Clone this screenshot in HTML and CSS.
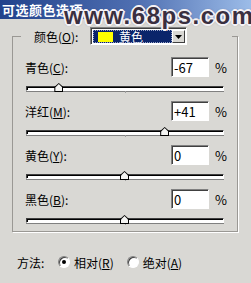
FILE: index.html
```html
<!DOCTYPE html>
<html lang="zh-CN">
<head>
    <meta charset="UTF-8">
    <meta name="viewport" content="width=device-width, initial-scale=1.0">
    <title>可选颜色选项</title>
    <link rel="stylesheet" href="styles.css">
</head>
<body>
    <div class="dialog">
        <div class="titlebar"><span class="title">可选颜色选项</span></div>
        <div class="watermark">www.68ps.com</div>

        <fieldset class="group">
            <legend class="group-head">
                <span class="lbl">颜色(<u>O</u>):</span>
                <div class="combo">
                    <div class="combo-field">
                        <span class="swatch"></span>
                        <span class="combo-text">黄色</span>
                    </div>
                    <div class="combo-btn">
                        <svg width="7" height="4" viewBox="0 0 7 4"><path d="M0 0h7L3.5 4z" fill="#000"/></svg>
                    </div>
                </div>
            </legend>

            <div class="channel">
                <div class="field-row">
                    <span class="lbl">青色(<u>C</u>):</span>
                    <div class="num">-67</div>
                    <span class="pct">%</span>
                </div>
                <div class="track"><span class="tick"></span><span class="thumb" style="left: 16.5%"></span></div>
            </div>

            <div class="channel">
                <div class="field-row">
                    <span class="lbl">洋红(<u>M</u>):</span>
                    <div class="num">+41</div>
                    <span class="pct">%</span>
                </div>
                <div class="track"><span class="tick"></span><span class="thumb" style="left: 70.5%"></span></div>
            </div>

            <div class="channel">
                <div class="field-row">
                    <span class="lbl">黄色(<u>Y</u>):</span>
                    <div class="num">0</div>
                    <span class="pct">%</span>
                </div>
                <div class="track"><span class="tick"></span><span class="thumb" style="left: 50%"></span></div>
            </div>

            <div class="channel">
                <div class="field-row">
                    <span class="lbl">黑色(<u>B</u>):</span>
                    <div class="num">0</div>
                    <span class="pct">%</span>
                </div>
                <div class="track"><span class="tick"></span><span class="thumb" style="left: 50%"></span></div>
            </div>
        </fieldset>

        <div class="method">
            <span class="method-lbl">方法:</span>
            <span class="radio checked"></span>
            <span class="radio-lbl">相对(<u>R</u>)</span>
            <span class="radio"></span>
            <span class="radio-lbl">绝对(<u>A</u>)</span>
        </div>
    </div>
</body>
</html>
```

FILE: styles.css
```css
body {
    margin: 0;
    background-color: #d9d8d4;
    font-family: "Noto Sans CJK SC", "DejaVu Sans", sans-serif;
    font-size: 12px;
    color: #000;
}

.dialog {
    position: relative;
    width: 251px;
    height: 283px;
    overflow: hidden;
}

.titlebar {
    height: 19px;
    display: flex;
    align-items: center;
    padding-left: 2px;
    background: linear-gradient(90deg, #22428c 0%, #5070b2 55%, #9cbce8 100%);
}

.title {
    color: #fff;
    font-weight: bold;
    font-size: 13px;
    line-height: 15px;
    letter-spacing: 0.5px;
    white-space: nowrap;
}

/* site watermark stamped over the dialog */
.watermark {
    position: absolute;
    left: 64px;
    top: 4px;
    white-space: nowrap;
    font-family: "Liberation Sans", Arial, sans-serif;
    font-weight: bold;
    font-size: 24px;
    line-height: 24px;
    letter-spacing: 1.5px;
    color: #3a2f40;
    text-shadow: -1px -1px 0 #f4f2f6, 1px -1px 0 #f4f2f6, -1px 1px 0 #f4f2f6, 1px 1px 0 #f4f2f6,
        0 -2px 0 #f4f2f6, 0 2px 0 #f4f2f6, -2px 0 0 #f4f2f6, 2px 0 0 #f4f2f6,
        0 0 3px #3a2f40;
}

u {
    text-decoration: underline;
    text-underline-offset: 1px;
}

.group {
    margin: 8px 0 0 12px;
    width: 226px;
    min-width: 0;
    box-sizing: border-box;
    padding: 12px 12px 8px 12px;
    border: 1px solid #9a9894;
    box-shadow: 1px 1px 0 #fff;
}

.group-head {
    display: flex;
    align-items: center;
    width: 211px;
    box-sizing: border-box;
    height: 18px;
    margin-left: -4px;
    padding: 0 0 0 13px;
}

.group-head .lbl {
    width: 56px;
}

.combo {
    display: flex;
    width: 97px;
    height: 18px;
    box-sizing: border-box;
    border: 1px solid;
    border-color: #808080 #fff #fff #808080;
    box-shadow: inset 1px 1px 0 #404040;
    background: #fff;
    padding: 2px 1px 1px 2px;
}

.combo-field {
    flex: 1;
    display: flex;
    align-items: center;
    background: #0a246a;
    outline: 1px dotted #9aa4c8;
    outline-offset: -1px;
    padding-left: 5px;
}

.swatch {
    width: 15px;
    height: 10px;
    background: #ffff00;
    margin-right: 6px;
}

.combo-text {
    color: #fff;
    line-height: 12px;
}

.combo-btn {
    width: 13px;
    display: flex;
    align-items: center;
    justify-content: center;
    background: #d9d8d4;
    box-sizing: border-box;
    border: 1px solid;
    border-color: #fff #404040 #404040 #fff;
}

.field-row {
    display: flex;
    align-items: center;
    height: 20px;
}

.field-row .lbl {
    flex: 1;
}

.num {
    width: 38px;
    height: 20px;
    box-sizing: border-box;
    border: 1px solid;
    border-color: #808080 #fff #fff #808080;
    box-shadow: inset 1px 1px 0 #404040;
    background: #fff;
    padding: 2px 0 0 2px;
    line-height: 15px;
    font-size: 13px;
    margin-right: 6px;
}

.pct {
    width: 10px;
    font-size: 13px;
}

.track {
    position: relative;
    height: 5px;
    margin: 9px 1px 10px 1px;
    box-sizing: border-box;
    border: 1px solid;
    border-color: #404040 #fff #fff #404040;
    box-shadow: inset 1px 1px 0 #000, 0 1px 0 #808080;
    background: #fff;
}

.channel:last-child .track {
    margin-bottom: 0;
}

.tick {
    position: absolute;
    left: 50%;
    top: 4px;
    width: 1px;
    height: 2px;
    background: #a0a0a0;
}

.thumb {
    position: absolute;
    top: -4px;
    width: 9px;
    height: 9px;
    margin-left: -5px;
    background: #000;
    clip-path: polygon(50% 0, 100% 45%, 100% 100%, 0 100%, 0 45%);
}

.thumb::after {
    content: "";
    position: absolute;
    left: 1px;
    top: 1px;
    width: 7px;
    height: 7px;
    background: #f4f4f2;
    clip-path: polygon(50% 0, 100% 50%, 100% 100%, 0 100%, 0 50%);
}

.method {
    display: flex;
    align-items: center;
    height: 16px;
    margin-top: 22px;
    padding-left: 17px;
}

.method-lbl {
    width: 41px;
}

.radio {
    width: 12px;
    height: 12px;
    box-sizing: border-box;
    border-radius: 50%;
    border: 1px solid;
    border-color: #808080 #fff #fff #808080;
    box-shadow: inset 1px 1px 0 #404040;
    background: #fff;
    margin-right: 4px;
    display: flex;
    align-items: center;
    justify-content: center;
}

.radio.checked::after {
    content: "";
    width: 4px;
    height: 4px;
    border-radius: 50%;
    background: #000;
}

.radio-lbl {
    margin-right: 13px;
}
```
